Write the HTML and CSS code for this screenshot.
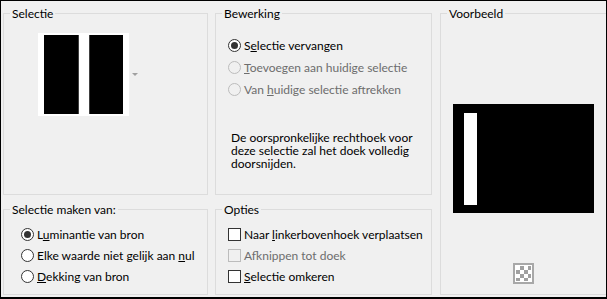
FILE: index.html
```html
<!DOCTYPE html>
<html lang="nl">
<head>
    <meta charset="utf-8">
    <title>Selectie uit masker</title>
    <link rel="stylesheet" href="styles.css">
</head>
<body>
    <div class="window">
        <div class="col col-left">
            <fieldset class="group group-top">
                <legend>Selectie</legend>
                <div class="selectie-view">
                    <div class="thumb">
                        <div class="bar bar-left"></div>
                        <div class="bar bar-right"></div>
                    </div>
                    <svg class="drop-arrow" width="6" height="3" viewBox="0 0 6 3"><path d="M0 0H6L3 3Z" fill="#a0a0a0"/></svg>
                </div>
            </fieldset>
            <fieldset class="group group-bottom">
                <legend>Selectie maken van:</legend>
                <div class="options options-source">
                    <div class="opt"><div class="radio checked"></div><span>L<u>u</u>minantie van bron</span></div>
                    <div class="opt"><div class="radio"></div><span>Elke waarde niet gelijk aan <u>n</u>ul</span></div>
                    <div class="opt"><div class="radio"></div><span><u>D</u>ekking van bron</span></div>
                </div>
            </fieldset>
        </div>

        <div class="col col-mid">
            <fieldset class="group group-top">
                <legend>Bewerking</legend>
                <div class="choices">
                    <div class="choice"><div class="radio checked"></div><span>S<u>e</u>lectie vervangen</span></div>
                    <div class="choice disabled"><div class="radio"></div><span><u>T</u>oevoegen aan huidige selectie</span></div>
                    <div class="choice disabled"><div class="radio"></div><span>Van <u>h</u>uidige selectie aftrekken</span></div>
                </div>
                <p class="note">De oorspronkelijke rechthoek voor deze selectie zal het doek volledig doorsnijden.</p>
            </fieldset>
            <fieldset class="group group-bottom">
                <legend>Opties</legend>
                <div class="options options-flags">
                    <div class="opt"><div class="check"></div><span>Naar <u>l</u>inkerbovenhoek verplaatsen</span></div>
                    <div class="opt disabled"><div class="check"></div><span>Af<u>k</u>nippen tot doek</span></div>
                    <div class="opt"><div class="check"></div><span><u>S</u>electie omkeren</span></div>
                </div>
            </fieldset>
        </div>

        <div class="col col-right">
            <fieldset class="group group-preview">
                <legend>Voorbeeld</legend>
                <div class="preview">
                    <div class="preview-bar"></div>
                </div>
                <div class="transparency"><div class="checker"></div></div>
            </fieldset>
        </div>
    </div>
</body>
</html>
```

FILE: styles.css
```css
body {
    margin: 0;
    font-family: 'Lato', 'Noto Sans', sans-serif;
    font-size: 12px;
    color: #000;
    background-color: #f0f0f0;
}

.window {
    width: 607px;
    height: 299px;
    box-sizing: border-box;
    border: 1px solid #000;
    border-bottom-width: 2px;
    background-color: #f0f0f0;
    padding: 5px 0 2px 0;
    display: flex;
    overflow: hidden;
}

.col {
    display: flex;
    flex-direction: column;
    gap: 7px;
}

.col-left {
    width: 205px;
    margin-left: 2px;
}

.col-mid {
    width: 217px;
    margin-left: 7px;
}

.col-right {
    flex: 1;
    margin-left: 8px;
}

/* group boxes */
.group {
    margin: 0;
    padding: 0;
    min-width: 0;
    border: 1px solid #dcdcdc;
}

.group legend {
    margin-left: 6px;
    padding: 0 2px;
    line-height: 15px;
}

.group-top {
    height: 189px;
    box-sizing: border-box;
}

.group-bottom {
    flex: 1;
}

.group-preview {
    height: 100%;
    box-sizing: border-box;
    border-right: none;
    display: flex;
    flex-direction: column;
    align-items: center;
}

/* selectie thumbnail */
.selectie-view {
    display: flex;
    align-items: center;
    margin-top: 12px;
    padding-left: 34px;
}

.thumb {
    display: flex;
    gap: 10px;
    padding: 2px 6px;
    background-color: #fff;
}

.bar {
    height: 79px;
    background-color: #000;
    box-sizing: border-box;
}

.bar-left {
    width: 35px;
    border-right: 1px solid #404040;
}

.bar-right {
    width: 34px;
    border-left: 1px solid #404040;
}

.drop-arrow {
    display: block;
    margin-left: 3px;
}

/* radio buttons and check boxes */
.radio,
.check {
    width: 13px;
    height: 13px;
    box-sizing: border-box;
    border: 1px solid #333;
    background-color: #fff;
    margin-right: 3px;
    flex-shrink: 0;
    position: relative;
}

.radio {
    border-radius: 50%;
}

.radio.checked::after {
    content: "";
    position: absolute;
    left: 2px;
    top: 2px;
    width: 7px;
    height: 7px;
    border-radius: 50%;
    background-color: #333;
}

.disabled {
    color: #6d6d6d;
}

.disabled .radio,
.disabled .check {
    border-color: #bcbcbc;
    background-color: #f0f0f0;
}

.choices {
    padding: 13px 0 0 12px;
}

.choice,
.opt {
    display: flex;
    align-items: center;
    white-space: nowrap;
}

.choice {
    height: 22px;
}

.opt {
    height: 21px;
}

.note {
    margin: 31px 0 0 0;
    padding: 0 10px 0 15px;
    line-height: 13px;
}

.options {
    margin-top: 7px;
}

.options-source {
    padding-left: 17px;
}

.options-flags {
    padding-left: 12px;
}

/* voorbeeld */
.preview {
    width: 141px;
    height: 109px;
    box-sizing: border-box;
    margin-top: 83px;
    padding: 9px 0 0 11px;
    background-color: #000;
}

.preview-bar {
    width: 13px;
    height: 92px;
    background-color: #fff;
}

.transparency {
    margin-top: 50px;
    width: 21px;
    height: 21px;
    box-sizing: border-box;
    border: 2px solid #a8a8a8;
    padding: 1px;
    background-color: #fff;
}

.checker {
    width: 15px;
    height: 15px;
    background: repeating-conic-gradient(#a0a0a0 0 25%, #fff 0 50%) 0 0 / 8px 8px;
}
```
